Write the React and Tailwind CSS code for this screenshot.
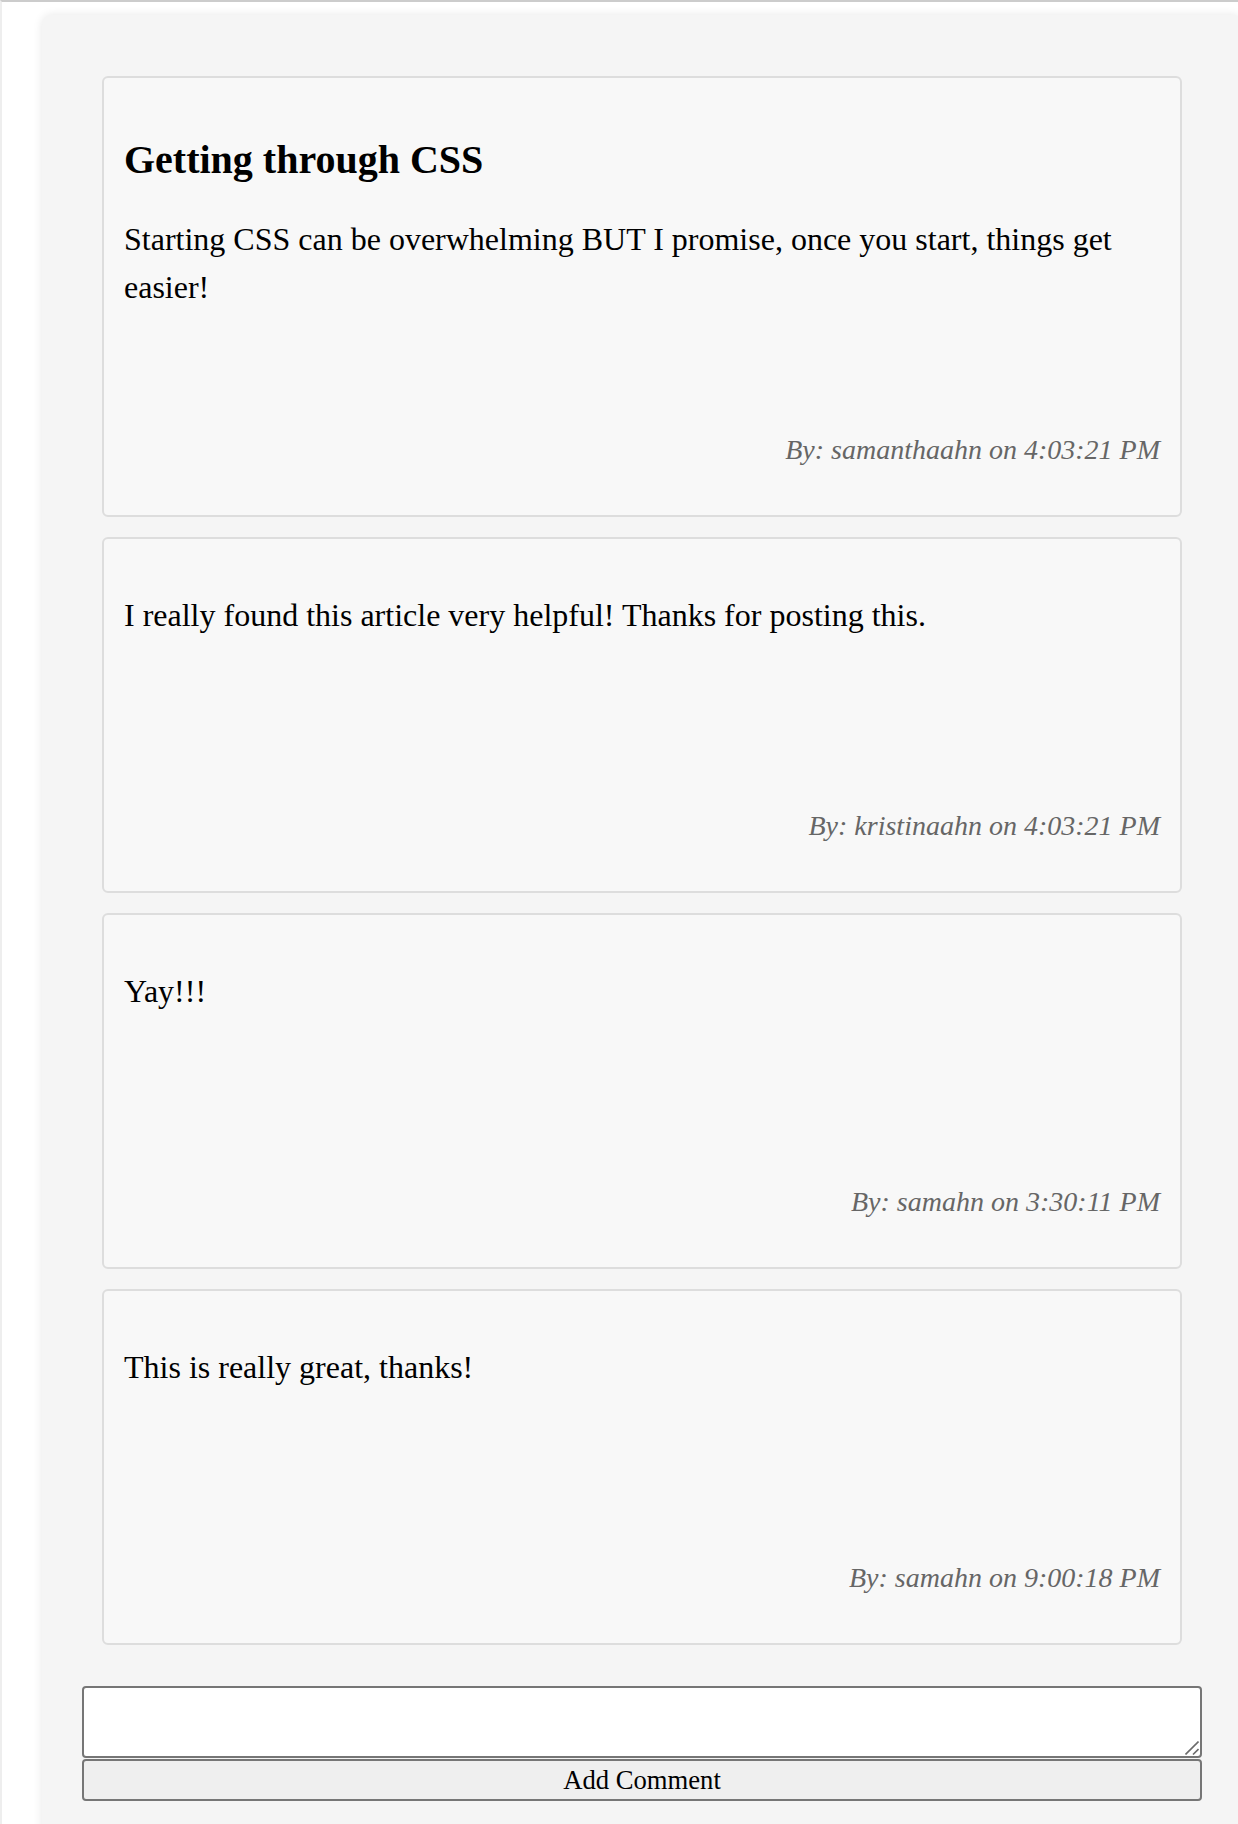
import React from "react";

const posts = [
  {
    title: "Getting through CSS",
    body: "Starting CSS can be overwhelming BUT I promise, once you start, things get easier!",
    by: "By: samanthaahn on 4:03:21 PM",
  },
  {
    body: "I really found this article very helpful! Thanks for posting this.",
    by: "By: kristinaahn on 4:03:21 PM",
  },
  { body: "Yay!!!", by: "By: samahn on 3:30:11 PM" },
  { body: "This is really great, thanks!", by: "By: samahn on 9:00:18 PM" },
];

function Card({ title, body, by }) {
  return (
    <div className="rounded-[6px] border-2 border-[#dddddd] bg-[#f8f8f8] px-[20px] pt-[20px] pb-[20px]">
      {title ? (
        <>
          <h2 className="mt-[32px] text-[40px] leading-[60px] font-bold text-black">{title}</h2>
          <p className="mt-[25px] h-[192px] text-[32px] leading-[48px] text-black">{body}</p>
        </>
      ) : (
        <p className="mt-[32px] h-[192px] text-[32px] leading-[48px] text-black">{body}</p>
      )}
      <div className="mt-[22px] mb-[24px] text-right text-[28px] leading-[42px] italic text-[#666666]">
        {by}
      </div>
    </div>
  );
}

export default function App() {
  return (
    <div
      className="min-h-[1824px] w-full overflow-hidden border-t-2 border-l-2 border-t-[#cccccc] border-l-[#eeeeee] bg-white"
      style={{ fontFamily: '"Liberation Serif", "Times New Roman", serif' }}
    >
      <div className="ml-[40px] mt-[13px] w-[1200px] rounded-[10px] bg-[#f5f5f5] px-[40px] pt-[61px] pb-[60px] shadow-[0_0_10px_rgba(0,0,0,0.1)]">
        <div className="mx-[20px] flex flex-col gap-[20px]">
          {posts.map((p, i) => (
            <Card key={i} {...p} />
          ))}
        </div>
        <div className="relative mt-[41px]">
          <textarea className="block h-[72px] w-full resize-none rounded-[4px] border-2 border-[#767676] bg-white outline-none" />
          <svg
            className="pointer-events-none absolute right-[3px] bottom-[3px]"
            width="14"
            height="14"
            viewBox="0 0 14 14"
          >
            <line x1="0.5" y1="13.5" x2="13.5" y2="0.5" stroke="#6b6b6b" strokeWidth="1.6" />
            <line x1="8" y1="13.5" x2="13.5" y2="8" stroke="#6b6b6b" strokeWidth="1.6" />
          </svg>
        </div>
        <button className="mt-[1px] block h-[42px] w-full rounded-[4px] border-2 border-[#767676] bg-[#efefef] text-center text-[26.67px] leading-[38px] text-black">
          Add Comment
        </button>
      </div>
    </div>
  );
}
